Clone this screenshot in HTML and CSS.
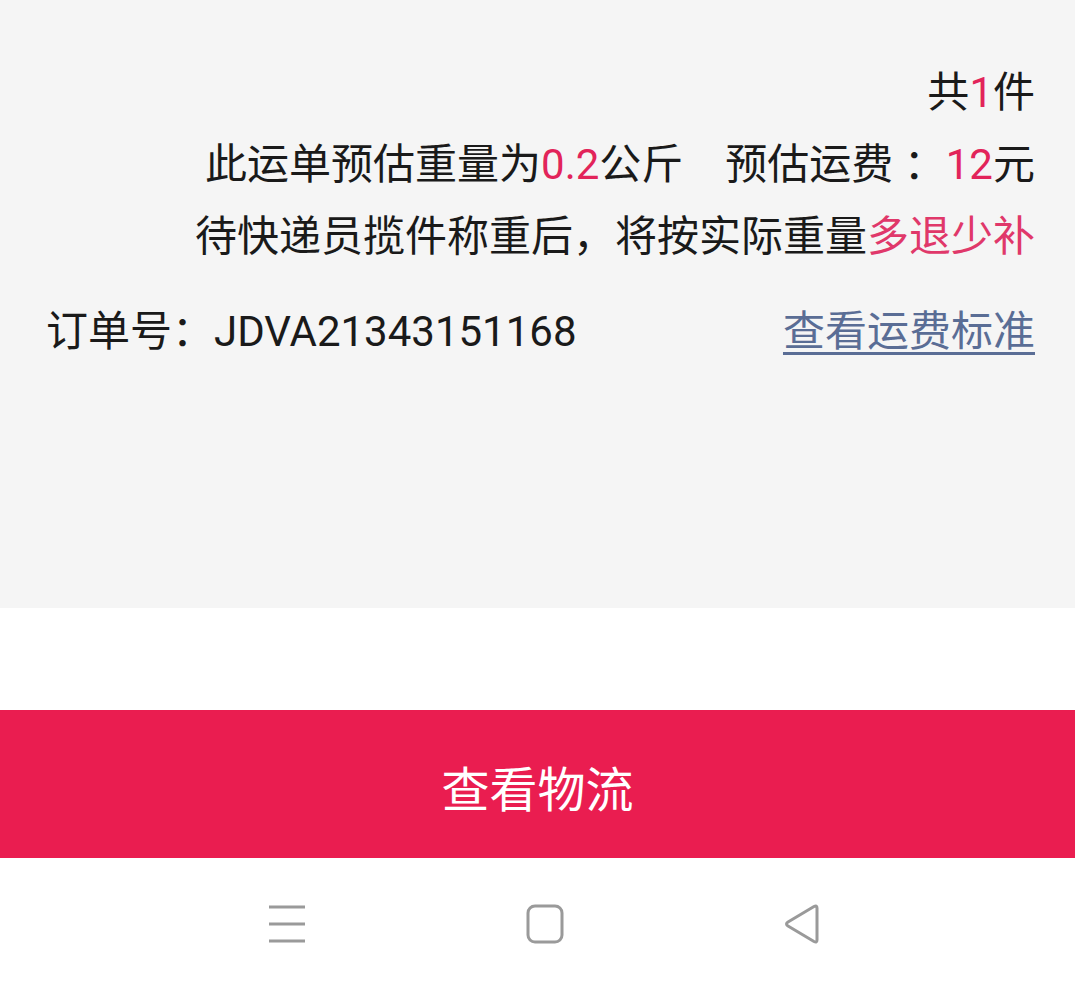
FILE: index.html
```
<!DOCTYPE html>
<html lang="zh-CN">
<head>
    <meta charset="UTF-8">
    <meta name="viewport" content="width=device-width, initial-scale=1.0">
    <title>订单详情</title>
    <link rel="stylesheet" href="styles.css">
</head>
<body>

<div class="order-info">
    <div class="line">共<span class="red">1</span>件</div>
    <div class="line">此运单预估重量为<span class="red">0.2</span>公斤<span class="fee">预估运费 ：<span class="red">12</span>元</span></div>
    <div class="line">待快递员揽件称重后，将按实际重量<span class="pink">多退少补</span></div>
    <div class="order-row">
        <span class="order-no">订单号：JDVA21343151168</span>
        <a class="fee-link" href="#">查看运费标准</a>
    </div>
</div>

<div class="spacer"></div>

<button class="track-btn">查看物流</button>

<!-- 底部导航 -->
<div class="nav-bar">
    <svg class="nav-icon" width="40" height="40" viewBox="0 0 40 40">
        <g stroke="#9a9a9a" stroke-width="3">
            <line x1="2" y1="3" x2="38" y2="3"/>
            <line x1="2" y1="20" x2="38" y2="20"/>
            <line x1="2" y1="37" x2="38" y2="37"/>
        </g>
    </svg>
    <svg class="nav-icon" width="40" height="40" viewBox="0 0 40 40">
        <rect x="3" y="2" width="34" height="36" rx="7" fill="none" stroke="#9a9a9a" stroke-width="3"/>
    </svg>
    <svg class="nav-icon" width="40" height="40" viewBox="0 0 40 40">
        <path d="M34 4 L34 36 Q34 39 31 37.5 L5 22 Q2 20 5 18 L31 2.5 Q34 1 34 4 Z" fill="none" stroke="#9a9a9a" stroke-width="3" stroke-linejoin="round"/>
    </svg>
</div>

</body>
</html>
```

FILE: styles.css
```
body {
    margin: 0;
    font-family: Roboto, "Noto Sans CJK SC", sans-serif;
    background-color: #fff;
    color: #1a1a1a;
}

.order-info {
    background-color: #f5f5f5;
    height: 608px;
    box-sizing: border-box;
    padding: 57px 40px 0 46px;
    font-size: 42px;
}

.line {
    text-align: right;
    line-height: 72px;
}

.red {
    color: #e2245a;
}

.pink {
    color: #e0386a;
}

.fee {
    margin-left: 42px;
}

.order-row {
    display: flex;
    justify-content: space-between;
    align-items: center;
    margin-top: 23px;
    line-height: 72px;
}

.fee-link {
    color: #5a6d95;
    text-decoration: underline;
    text-decoration-thickness: 3px;
    text-underline-offset: 6px;
}

.spacer {
    height: 102px;
}

.track-btn {
    display: block;
    width: 100%;
    height: 148px;
    border: none;
    background-color: #ea1d50;
    color: #fff;
    font-family: Roboto, "Noto Sans CJK SC", sans-serif;
    font-size: 48px;
    padding-top: 4px;
    cursor: pointer;
}

.nav-bar {
    height: 132px;
    display: flex;
    justify-content: space-between;
    align-items: center;
    padding: 0 252px 0 267px;
}
```
